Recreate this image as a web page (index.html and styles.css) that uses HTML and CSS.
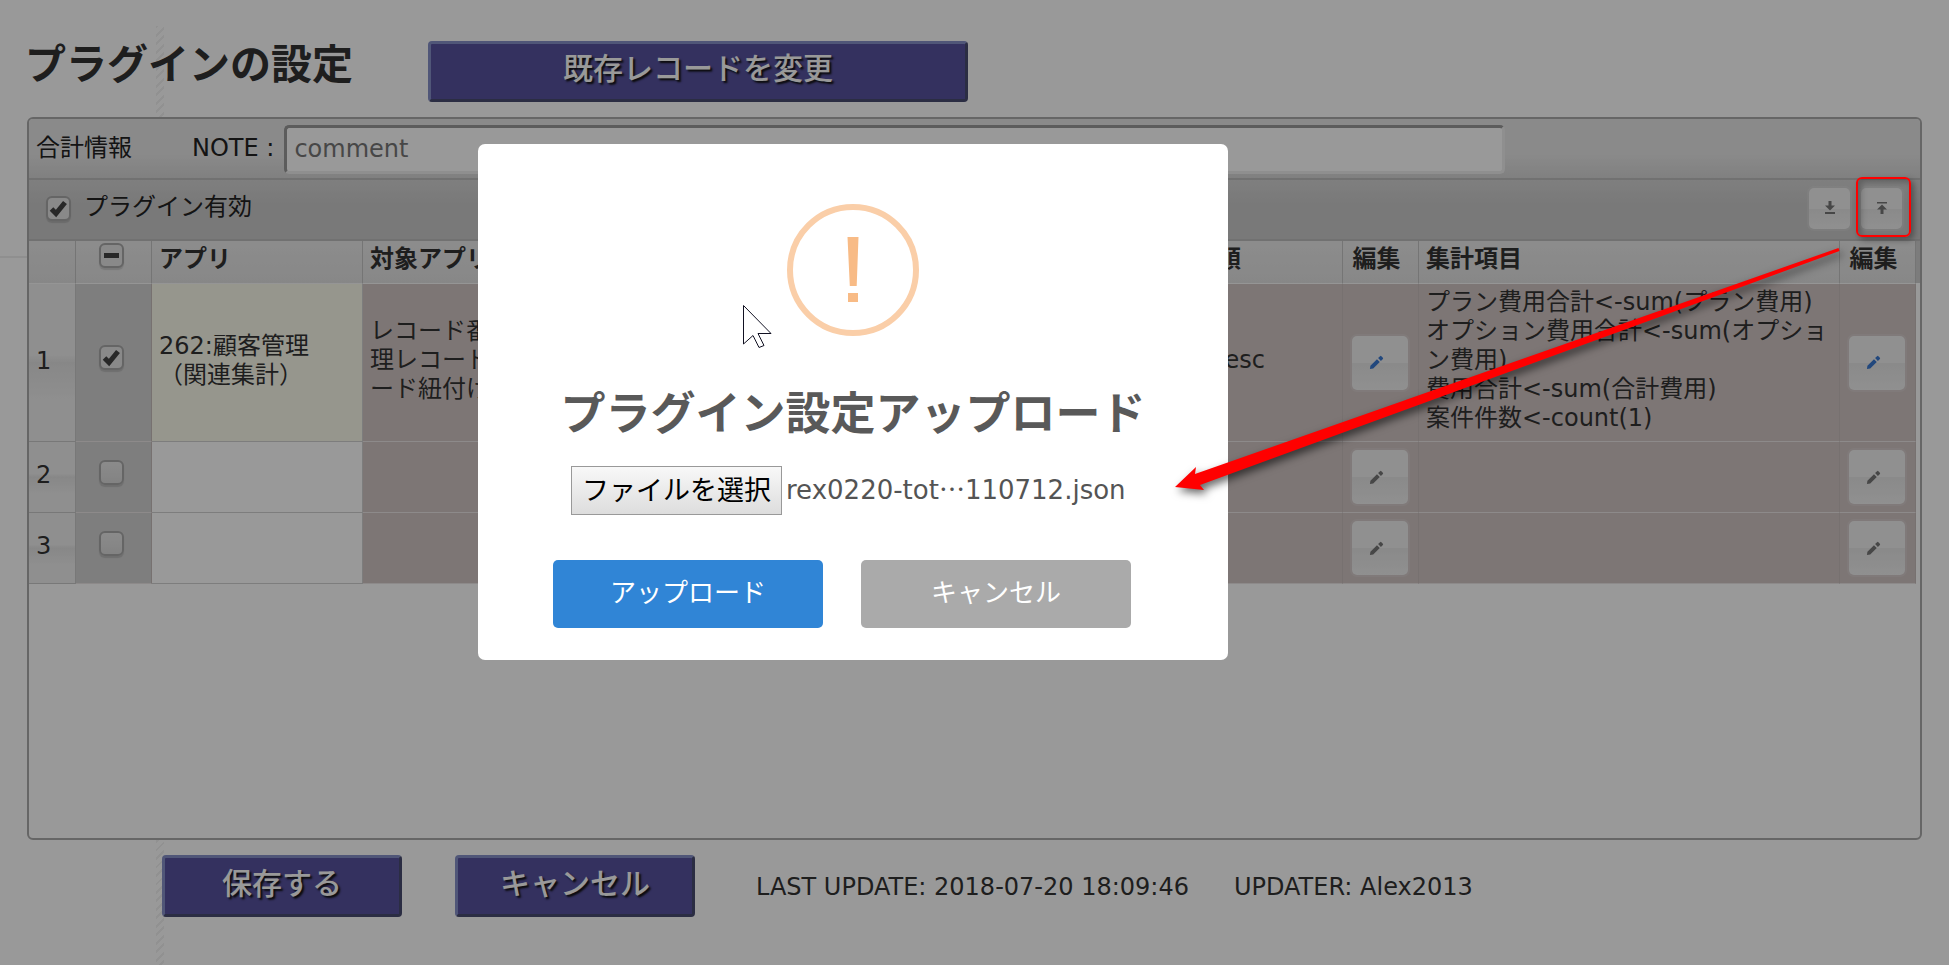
FILE: index.html
```html
<!DOCTYPE html>
<html lang="ja">
<head>
<meta charset="utf-8">
<title>プラグインの設定</title>
<link rel="stylesheet" href="styles.css">
</head>
<body>
<svg class="defs" width="0" height="0" aria-hidden="true">
  <symbol id="pencil" viewBox="0 0 16 16">
    <path d="M1 15l.5-3.500L8.500 4.500 11.500 7.500 4.500 14.500zM9.700 3.300L11.800 1.200q.7-.6 1.400 0l1.600 1.600q.6.700 0 1.400L12.700 6.300z" fill="currentColor"/>
  </symbol>
</svg>
<main class="page">
  <header class="page-head">
    <h1 class="page-title">プラグインの設定</h1>
    <button class="btn btn-wide" type="button">既存レコードを変更</button>
  </header>

  <section class="panel">
    <div class="bar bar-info">
      <span class="bar-label">合計情報</span>
      <label class="note-label" for="note">NOTE :</label>
      <input class="note" id="note" type="text" value="comment">
    </div>
    <div class="bar bar-tools">
      <label class="enable"><input class="check" type="checkbox" checked><span class="enable-text">プラグイン有効</span></label>
      <button class="tool" type="button" aria-label="ダウンロード">
        <svg width="12" height="14" viewBox="0 0 12 14"><path d="M4.500 0h3v4.500H11L6 9.500 1 4.500h3.500zM1 11h10v2H1z" fill="currentColor"/></svg>
      </button>
      <span class="tool-mark">
        <button class="tool" type="button" aria-label="アップロード">
          <svg width="12" height="14" viewBox="0 0 12 14"><path d="M1 1h10v1.500H1zM6 3.500l5 5H7.500V13h-3V8.500H1z" fill="currentColor"/></svg>
        </button>
      </span>
    </div>
    <div class="grid-wrap">
      <table class="grid">
        <colgroup>
          <col class="c-num"><col class="c-sel"><col class="c-app"><col><col class="c-sort"><col class="c-edit"><col class="c-sum"><col class="c-edit">
        </colgroup>
        <thead>
          <tr>
            <th></th>
            <th class="sel-head"><input class="check check-some" type="checkbox" aria-label="すべて選択"></th>
            <th>アプリ</th>
            <th>対象アプリ</th>
            <th>並び順</th>
            <th class="mid">編集</th>
            <th>集計項目</th>
            <th class="mid">編集</th>
          </tr>
        </thead>
        <tbody>
          <tr class="tall">
            <td class="num">1</td>
            <td class="sel"><input class="check" type="checkbox" checked aria-label="1行目"></td>
            <td class="app on">262:顧客管理<br>（関連集計）</td>
            <td>レコード番号<br>理レコード<br>ード紐付け</td>
            <td>No desc</td>
            <td class="mid"><button class="edit active" type="button" aria-label="編集"><svg width="15" height="15"><use href="#pencil"/></svg></button></td>
            <td>プラン費用合計&lt;-sum(プラン費用)<br>オプション費用合計&lt;-sum(オプショ<br>ン費用)<br>費用合計&lt;-sum(合計費用)<br>案件件数&lt;-count(1)</td>
            <td class="mid"><button class="edit active" type="button" aria-label="編集"><svg width="15" height="15"><use href="#pencil"/></svg></button></td>
          </tr>
          <tr>
            <td class="num">2</td>
            <td class="sel"><input class="check" type="checkbox" aria-label="2行目"></td>
            <td class="app"></td><td></td><td></td>
            <td class="mid"><button class="edit" type="button" aria-label="編集"><svg width="15" height="15"><use href="#pencil"/></svg></button></td>
            <td></td>
            <td class="mid"><button class="edit" type="button" aria-label="編集"><svg width="15" height="15"><use href="#pencil"/></svg></button></td>
          </tr>
          <tr>
            <td class="num">3</td>
            <td class="sel"><input class="check" type="checkbox" aria-label="3行目"></td>
            <td class="app"></td><td></td><td></td>
            <td class="mid"><button class="edit" type="button" aria-label="編集"><svg width="15" height="15"><use href="#pencil"/></svg></button></td>
            <td></td>
            <td class="mid"><button class="edit" type="button" aria-label="編集"><svg width="15" height="15"><use href="#pencil"/></svg></button></td>
          </tr>
        </tbody>
      </table>
    </div>
  </section>

  <footer class="page-foot">
    <button class="btn" type="button">保存する</button>
    <button class="btn" type="button">キャンセル</button>
    <span class="stamp">LAST UPDATE: 2018-07-20 18:09:46</span>
    <span class="stamp">UPDATER: Alex2013</span>
  </footer>
</main>

<div class="overlay">
  <form class="modal" role="dialog" aria-labelledby="dlg">
    <div class="warn" aria-hidden="true">
      <svg width="12" height="66" viewBox="0 0 12 66"><path d="M.5 0h11L9.700 49H2.800zM1 56h10v9H1z" fill="#f8bb86"/></svg>
    </div>
    <h2 class="modal-title" id="dlg">プラグイン設定アップロード</h2>
    <div class="file">
      <input class="file-input" id="file" type="file">
      <label class="file-btn" for="file">ファイルを選択</label>
      <span class="file-name">rex0220-tot<span class="dots">…</span>110712.json</span>
    </div>
    <div class="modal-actions">
      <button class="act act-ok" type="button">アップロード</button>
      <button class="act act-cancel" type="button">キャンセル</button>
    </div>
  </form>
</div>

<div class="mark-box"></div>
<svg class="arrow" width="690" height="270" viewBox="0 0 690 270" aria-hidden="true">
  <path d="M678.500 12L679.500 15 40 249 44 254 15 251 36 231 35 238Z" fill="#f00"/>
</svg>
<svg class="cursor" width="32" height="46" viewBox="0 0 32 46" aria-hidden="true">
  <path d="M1.500 1.500v38.500L11 31.500l6 12 5-2L16 29.500h13z" fill="#fff" stroke="#112"/>
</svg>
</body>
</html>
```
FILE: styles.css
```css
* { box-sizing: border-box; }
body {
  margin: 0;
  min-height: 100vh;
  background: #fff;
  color: #333;
  font-family: "DejaVu Sans", "Noto Sans CJK JP", sans-serif;
  font-size: 24px;
  line-height: 29px;
}
button, input { font: inherit; color: inherit; }
.defs { position: absolute; }

.page {
  min-height: 100vh;
  padding: 41px 27px 0;
  background:
    repeating-linear-gradient(135deg, #f2f2f2 0 2px, transparent 2px 6px) 156px 26px / 8px 100% no-repeat,
    linear-gradient(#eee, #eee) 0 256px / 27px 2px no-repeat;
}
.page-head { display: flex; align-items: flex-start; gap: 75px; }
.page-title { margin: 0 0 0 -2px; font-size: 41px; line-height: 48px; }

.btn {
  width: 240px;
  height: 62px;
  padding: 0 0 5px;
  border: 3px solid;
  border-color: #858fc8 #484b71 #484b71 #858fc8;
  border-radius: 4px;
  background: #57529f;
  color: #fff;
  font-size: 30px;
  font-weight: 500;
  line-height: 36px;
  text-shadow: 2px 2px 2px #111;
}
.btn-wide { width: 540px; height: 61px; }

.panel {
  margin-top: 15px;
  min-height: 723px;
  border: 2px solid #aaa;
  border-radius: 6px;
  background: #fff;
  overflow: hidden;
}
.bar {
  display: flex;
  align-items: center;
  height: 61px;
  color: #222;
  border-bottom: 2px solid #bcbcbc;
}
.bar-info { padding: 2px 0 0 7px; background: linear-gradient(#e6e6e6 60%, #d6d6d6); }
.bar-label, .note-label { padding-bottom: 2px; }
.bar-tools { padding: 0 18px 3px 17px; background: linear-gradient(#d4d4d4, #cacaca 40%, #cacaca); }
.note-label { margin: 0 10px 0 60px; }
.note {
  width: 1221px;
  height: 49px;
  padding: 0 7px 2px;
  border: 3px solid;
  border-color: #999 #eee #eee #999;
  border-radius: 5px;
  background: #fff;
  color: #777;
}
.enable { display: flex; align-items: center; gap: 13px; margin-right: auto; }
.enable-text { padding-bottom: 2px; }

.check {
  appearance: none;
  flex: none;
  display: block;
  width: 25px;
  height: 25px;
  margin: 0 auto;
  border: 2px solid #a8a8a8;
  border-radius: 6px;
  background: linear-gradient(#e8e8e8, #dadada) center / 100% 100% no-repeat;
  box-shadow: 0 2px 1px rgba(0, 0, 0, .12);
}
.check:checked {
  background: url("data:image/svg+xml,%3Csvg xmlns='http://www.w3.org/2000/svg' viewBox='0 0 21 21'%3E%3Cpath d='M3.500 11l4.500 4.500 9-11' fill='none' stroke='%23444' stroke-width='5'/%3E%3C/svg%3E") center / 100% 100% no-repeat, #e4e4e4;
}
.check-some { background: linear-gradient(#444, #444) center / 15px 5px no-repeat, #e4e4e4; }

.tool, .edit {
  display: flex;
  align-items: center;
  justify-content: center;
  padding: 0;
  border: 0;
  border-radius: 5px;
  background: linear-gradient(#f0f0f0 50%, #e6e6e6 50%, #f0f0f0);
  box-shadow: 0 0 0 2px rgba(255, 255, 255, .12);
  color: #777;
}
.tool { width: 41px; height: 41px; }
.tool-mark { margin-left: 11px; }
.edit { width: 56px; height: 54px; margin: 0 auto; padding-right: 6px; }
.edit.active { color: #3a78d0; }

.grid-wrap { padding-right: 4px; background: linear-gradient(#cfcfcf, #cfcfcf) right top / 4px 42px no-repeat; }
.grid { width: 100%; border-collapse: separate; border-spacing: 0; table-layout: fixed; }
.c-num { width: 47px; }
.c-sel { width: 76px; }
.c-app { width: 211px; }
.c-sort { width: 181px; }
.c-edit { width: 76px; }
.c-sum { width: 421px; }
.grid th {
  height: 43px;
  padding: 0 7px 6px;
  text-align: left;
  border-right: 1px solid #c4c4c4;
  border-bottom: 1px solid #f8f8f8;
  background: linear-gradient(#eaeaea, #e2e2e2);
}
.grid td {
  height: 71px;
  padding: 0 7px;
  border-right: 1px solid #c6bcbb;
  border-bottom: 1px solid #ebe6e6;
  background: #d0c5c4;
  white-space: nowrap;
}
.grid .tall td { height: 158px; padding-bottom: 4px; }
.grid th.mid { padding-right: 8px; padding-left: 0; text-align: center; }
.grid td.mid, .grid .tall td.mid { padding: 0 2px 0 0; }
.grid td.num { padding-bottom: 3px; border-color: #c8c8c8; background: linear-gradient(#efefef 45%, #e2e2e2 50%, #efefef 75%); }
.grid td.sel, .grid .tall td.sel { padding: 0 5px 10px 0; background: #d2d2d2; }
.grid th.sel-head { padding: 0 5px 13px 0; }
.grid .app { background: #fff; border-color: #d0d0d0; }
.grid .app.on { background: #fafaec; }

.page-foot {
  display: flex;
  align-items: center;
  gap: 53px;
  padding: 15px 0 40px 135px;
}
.stamp { margin-left: 8px; padding-top: 2px; }
.stamp + .stamp { margin-left: -8px; }

.overlay {
  position: fixed;
  inset: 0;
  display: flex;
  align-items: center;
  justify-content: center;
  padding: 0 243px 161px 0;
  background: rgba(0, 0, 0, .4);
}
.modal {
  width: 750px;
  padding: 60px 75px 32px;
  border-radius: 7px;
  background: #fff;
  color: #545454;
  text-align: center;
}
.warn {
  display: flex;
  align-items: center;
  justify-content: center;
  width: 132px;
  height: 132px;
  margin: 0 auto;
  border: 6px solid #facea8;
  border-radius: 50%;
}
.modal-title {
  margin: 49px 0 21px;
  color: #595959;
  font-size: 45px;
  line-height: 60px;
  white-space: nowrap;
}
.file { position: relative; display: flex; align-items: center; gap: 4px; margin-left: 18px; font-size: 27px; }
.file-input { position: absolute; width: 1px; height: 1px; opacity: 0; }
.file-name { padding-bottom: 3px; font-size: 26px; white-space: nowrap; }
.dots { font-family: "Noto Sans CJK JP", sans-serif; }
.file-btn {
  padding: 6px 10px;
  border: 1px solid #999;
  background: linear-gradient(#f8f8f8, #ddd);
  color: #000;
  line-height: 35px;
}
.modal-actions { display: flex; gap: 38px; margin-top: 45px; }
.act {
  width: 270px;
  height: 68px;
  padding: 0 0 1px;
  border: 0;
  border-radius: 5px;
  color: #fff;
  font-size: 26px;
}
.act-ok { background: #3085d6; }
.act-cancel { background: #aaa; }

.mark-box {
  position: absolute;
  top: 177px;
  right: 38px;
  width: 55px;
  height: 60px;
  border: 2px solid #f00;
  border-radius: 6px;
  box-shadow: 3px 3px 6px rgba(0, 0, 0, .35), inset 3px 3px 6px rgba(0, 0, 0, .25);
}
.arrow {
  position: absolute;
  top: 236px;
  left: 1160px;
  filter: drop-shadow(3px 4px 4px rgba(0, 0, 0, .6));
}
.cursor { position: absolute; top: 304px; left: 742px; }
```
